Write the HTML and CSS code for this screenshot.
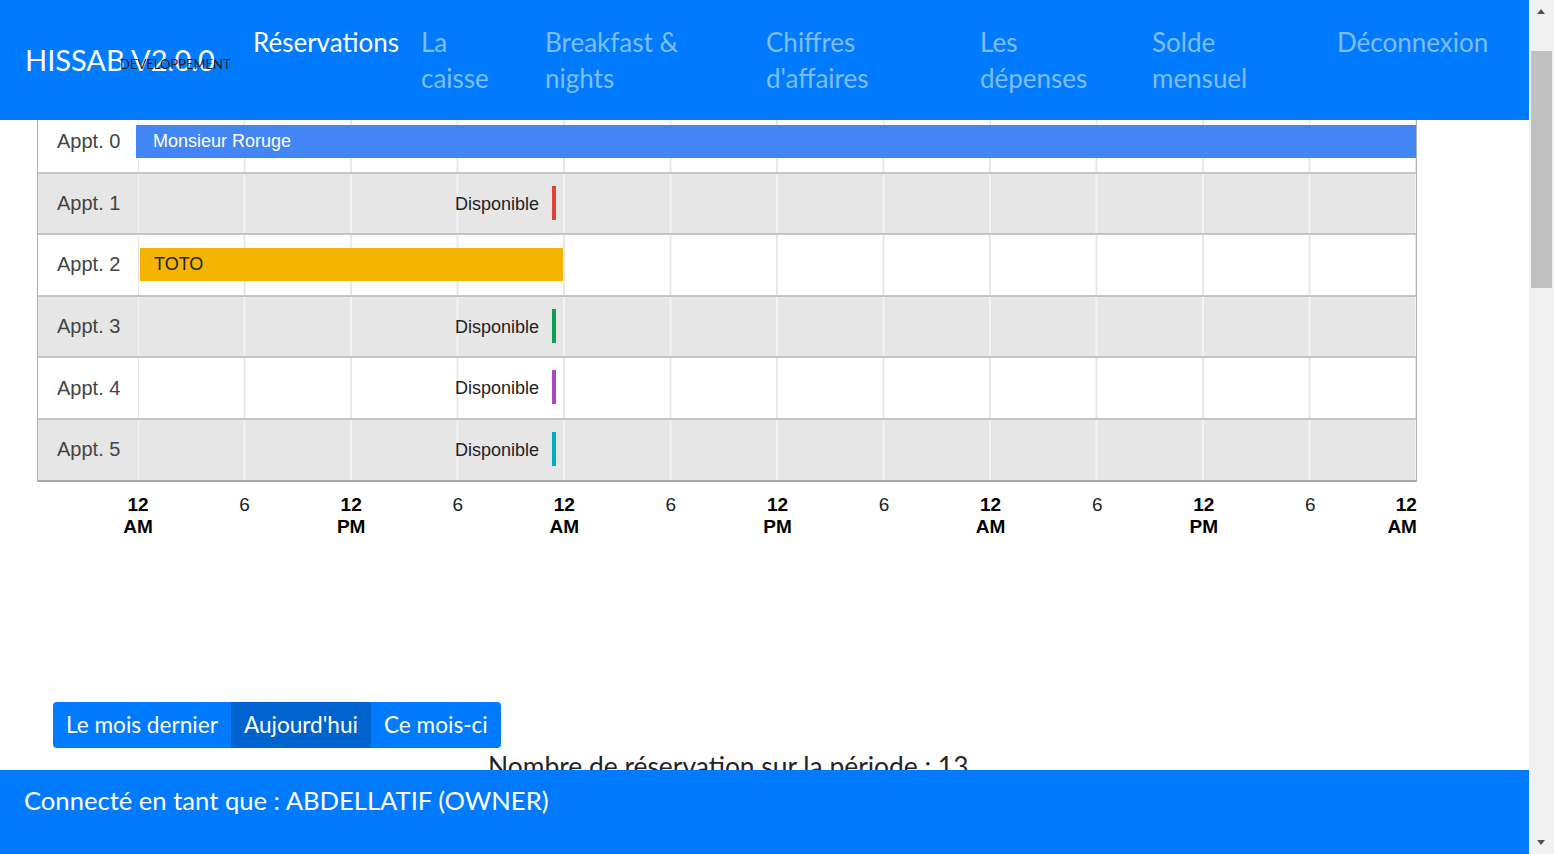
FILE: index.html
```html
<!DOCTYPE html>
<html lang="fr">
<head>
<meta charset="utf-8">
<title>HISSAB V2.0.0</title>
<link rel="stylesheet" href="styles.css">
</head>
<body>
<header class="topbar">
  <div class="brand">HISSAB V2.0.0<span class="env">DEVELOPPEMENT</span></div>
  <nav class="nav">
    <a class="nav-link active">Réservations</a>
    <a class="nav-link">La<br>caisse</a>
    <a class="nav-link">Breakfast &amp;<br>nights</a>
    <a class="nav-link">Chiffres<br>d'affaires</a>
    <a class="nav-link">Les<br>dépenses</a>
    <a class="nav-link">Solde<br>mensuel</a>
    <a class="nav-link">Déconnexion</a>
  </nav>
</header>

<main class="page">
  <section class="chart">
    <div class="row">
      <div class="label">Appt. 0</div>
      <div class="track">
        <div class="bar blue" style="left:-2px;width:1280px">Monsieur Roruge</div>
      </div>
    </div>
    <div class="row alt">
      <div class="label">Appt. 1</div>
      <div class="track">
        <div class="tick red" style="left:414px"><span class="tick-label">Disponible</span></div>
      </div>
    </div>
    <div class="row">
      <div class="label">Appt. 2</div>
      <div class="track">
        <div class="bar yellow" style="left:2px;width:423px">TOTO</div>
      </div>
    </div>
    <div class="row alt">
      <div class="label">Appt. 3</div>
      <div class="track">
        <div class="tick green" style="left:414px"><span class="tick-label">Disponible</span></div>
      </div>
    </div>
    <div class="row">
      <div class="label">Appt. 4</div>
      <div class="track">
        <div class="tick purple" style="left:414px"><span class="tick-label">Disponible</span></div>
      </div>
    </div>
    <div class="row alt">
      <div class="label">Appt. 5</div>
      <div class="track">
        <div class="tick cyan" style="left:414px"><span class="tick-label">Disponible</span></div>
      </div>
    </div>
  </section>

  <div class="axis">
    <div class="ax"><b>12<br>AM</b></div>
    <div class="ax"><span>6</span></div>
    <div class="ax"><b>12<br>PM</b></div>
    <div class="ax"><span>6</span></div>
    <div class="ax"><b>12<br>AM</b></div>
    <div class="ax"><span>6</span></div>
    <div class="ax"><b>12<br>PM</b></div>
    <div class="ax"><span>6</span></div>
    <div class="ax"><b>12<br>AM</b></div>
    <div class="ax"><span>6</span></div>
    <div class="ax"><b>12<br>PM</b></div>
    <div class="ax"><span>6</span></div>
    <div class="ax last"><b>12<br>AM</b></div>
  </div>

  <div class="controls">
    <div class="btn-group">
      <button class="btn">Le mois dernier</button>
      <button class="btn active">Aujourd'hui</button>
      <button class="btn">Ce mois-ci</button>
    </div>
  </div>
  <p class="count">Nombre de réservation sur la période : 13</p>
</main>

<footer class="footer">Connecté en tant que : ABDELLATIF (OWNER)</footer>

<div class="scrollbar">
  <span class="arrow up"></span>
  <span class="thumb"></span>
  <span class="arrow down"></span>
</div>
</body>
</html>
```

FILE: styles.css
```css
html, body {
  margin: 0;
  padding: 0;
  height: 100%;
  overflow: hidden;
  background: #fff;
}

body {
  font-family: "Lato", "Open Sans", sans-serif;
  color: #212529;
}

.topbar {
  position: fixed;
  top: 0;
  left: 0;
  width: 1529px;
  height: 120px;
  background: #007bff;
  display: flex;
  z-index: 10;
}

.brand {
  position: relative;
  width: 228px;
  padding-left: 25px;
  font-size: 29px;
  line-height: 120px;
  color: #fff;
  white-space: nowrap;
}

.env {
  position: absolute;
  left: 120px;
  top: 56px;
  font-size: 13px;
  line-height: 16px;
  color: #222;
}

.nav {
  display: grid;
  grid-template-columns: 168px 124px 221px 214px 172px 185px 192px;
  padding-top: 24px;
  font-size: 26px;
  line-height: 36px;
}

.nav-link {
  color: rgba(255, 255, 255, 0.5);
  white-space: nowrap;
}

.nav-link.active {
  color: #fff;
}

.page {
  padding-top: 110px;
}

.chart {
  margin-left: 37px;
  width: 1380px;
  box-sizing: border-box;
  border-left: 1px solid #b0b0b0;
  border-right: 1px solid #b0b0b0;
  border-bottom: 2px solid #a8a8a8;
  font-family: "Liberation Sans", Arial, sans-serif;
}

.row {
  display: grid;
  grid-template-columns: 100px 1fr;
  height: 61.6px;
  box-sizing: border-box;
  border-top: 2px solid #c4c4c4;
  background: #fff;
  --line: #e8e8e8;
}

.row.alt {
  background: #e6e6e6;
  --line: #f4f4f4;
}

.label {
  display: flex;
  align-items: center;
  padding-left: 19px;
  font-size: 20px;
  color: #444;
}

.track {
  position: relative;
  background-image: linear-gradient(to right, var(--line) 0 2px, transparent 2px);
  background-size: calc(100% / 12) 100%;
  background-position: -1px 0;
}

.bar {
  position: absolute;
  top: 13px;
  height: 33px;
  box-sizing: border-box;
  display: flex;
  align-items: center;
  font-size: 18px;
  white-space: nowrap;
}

.bar.blue {
  background: #4285f4;
  color: #fff;
  padding-left: 17px;
}

.bar.yellow {
  background: #f4b400;
  color: #222;
  padding-left: 14px;
}

.tick {
  position: absolute;
  top: 12px;
  width: 4px;
  height: 34px;
}

.tick.red { background: #db4437; }
.tick.green { background: #0f9d58; }
.tick.purple { background: #ab47bc; }
.tick.cyan { background: #00acc1; }

.tick-label {
  position: absolute;
  right: 17px;
  top: 1px;
  line-height: 34px;
  font-size: 18px;
  color: #222;
  white-space: nowrap;
}

.axis {
  display: flex;
  justify-content: space-between;
  margin-left: 138px;
  width: 1279px;
  margin-top: 12px;
  font-family: "Liberation Sans", Arial, sans-serif;
  font-size: 19px;
  line-height: 22px;
  color: #000;
}

.ax {
  width: 0;
  display: flex;
  justify-content: center;
  text-align: center;
  white-space: nowrap;
}

.ax.last {
  justify-content: flex-end;
  text-align: right;
}

.ax span {
  color: #222;
}

.controls {
  padding-left: 53px;
  margin-top: 164px;
}

.btn-group {
  display: inline-flex;
  border-radius: 4px;
  overflow: hidden;
}

.btn {
  height: 46px;
  border: 0;
  margin: 0;
  padding: 0 13px;
  background: #007bff;
  color: #fff;
  font-family: "Lato", "Open Sans", sans-serif;
  font-size: 22.6px;
}

.btn.active {
  background: #0062cc;
}

.count {
  margin: 2px 0 0;
  padding-left: 488px;
  font-size: 26.4px;
  line-height: 32px;
  color: #212529;
}

.footer {
  position: fixed;
  left: 0;
  bottom: 0;
  width: 1529px;
  height: 84px;
  box-sizing: border-box;
  padding: 14px 24px;
  background: #007bff;
  color: #fff;
  font-size: 25.6px;
  line-height: 32px;
  z-index: 10;
}

.scrollbar {
  position: fixed;
  top: 0;
  right: 0;
  width: 25px;
  height: 854px;
  background: #f1f1f1;
  z-index: 11;
}

.thumb {
  position: absolute;
  left: 2px;
  top: 51px;
  width: 21px;
  height: 237px;
  background: #c1c1c1;
}

.arrow {
  position: absolute;
  left: 8px;
  width: 0;
  height: 0;
  border-left: 4px solid transparent;
  border-right: 4px solid transparent;
}

.arrow.up {
  top: 9px;
  border-bottom: 5px solid #505050;
}

.arrow.down {
  bottom: 9px;
  border-top: 5px solid #505050;
}
```
